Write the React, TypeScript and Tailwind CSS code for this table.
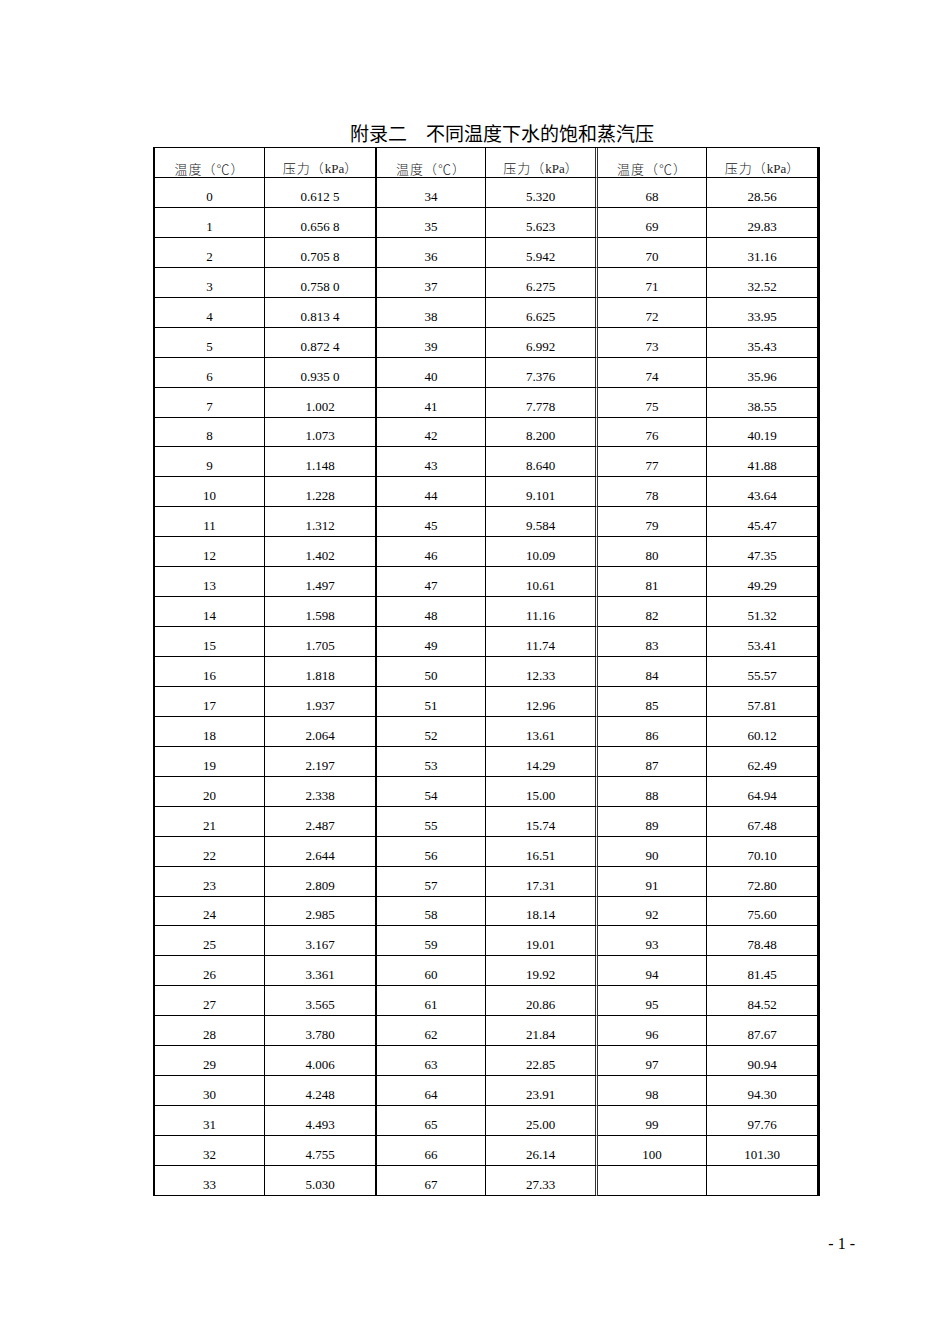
import React from "react";

const c1 = ["0.612 5","0.656 8","0.705 8","0.758 0","0.813 4","0.872 4","0.935 0","1.002","1.073","1.148","1.228","1.312","1.402","1.497","1.598","1.705","1.818","1.937","2.064","2.197","2.338","2.487","2.644","2.809","2.985","3.167","3.361","3.565","3.780","4.006","4.248","4.493","4.755","5.030"];
const c2 = ["5.320","5.623","5.942","6.275","6.625","6.992","7.376","7.778","8.200","8.640","9.101","9.584","10.09","10.61","11.16","11.74","12.33","12.96","13.61","14.29","15.00","15.74","16.51","17.31","18.14","19.01","19.92","20.86","21.84","22.85","23.91","25.00","26.14","27.33"];
const c3 = ["28.56","29.83","31.16","32.52","33.95","35.43","35.96","38.55","40.19","41.88","43.64","45.47","47.35","49.29","51.32","53.41","55.57","57.81","60.12","62.49","64.94","67.48","70.10","72.80","75.60","78.48","81.45","84.52","87.67","90.94","94.30","97.76","101.30"];

const serif = { fontFamily: '"Liberation Serif", "Noto Sans CJK SC", serif' };
const cjk = { fontFamily: '"Noto Sans CJK SC", sans-serif' };

function Row({ cells, header }: { cells: React.ReactNode[]; header?: boolean }) {
  const base = header
    ? "flex items-end justify-center border-b border-black pb-[1px] leading-[15px] text-[13px] text-[#222]"
    : "flex items-end justify-center border-b border-black pb-[3px] leading-[15px] text-[13px] text-black";
  return (
    <div className={header ? "flex h-[30px]" : "flex h-[29.94px]"}>
      <div className={`${base} w-[110px] border-r border-r-black`}>{cells[0]}</div>
      <div className={`${base} w-[112px] border-r-2 border-r-black`}>{cells[1]}</div>
      <div className={`${base} w-[109px] border-r border-r-black`}>{cells[2]}</div>
      <div className={`${base} w-[112px] border-r-[3px] border-double border-r-[#333]`}>{cells[3]}</div>
      <div className={`${base} w-[109px] border-r border-r-black`}>{cells[4]}</div>
      <div className={`${base} w-[113px] border-r-[3px] border-r-black`}>{cells[5]}</div>
    </div>
  );
}

export default function App() {
  const h1 = (
    <span style={cjk} className="font-light tracking-[1px]">温度（℃）</span>
  );
  const h2 = (
    <span>
      <span style={cjk} className="font-light tracking-[1px]">压力（</span>
      <span style={serif}>kPa</span>
      <span style={cjk} className="font-light">）</span>
    </span>
  );
  const rows: string[][] = [];
  for (let i = 0; i < 34; i++) {
    rows.push([
      String(i),
      c1[i],
      String(i + 34),
      c2[i],
      i < 33 ? String(i + 68) : "",
      i < 33 ? c3[i] : "",
    ]);
  }
  return (
    <div className="w-[950px] h-[1342px] bg-white pt-[123px]" style={serif}>
      <div
        className="ml-[350px] text-[19px] leading-[19px] text-black whitespace-pre"
        style={cjk}
      >
        附录二　不同温度下水的饱和蒸汽压
      </div>
      <div className="ml-[153px] mt-[5px] w-[667px] border-l-2 border-t border-black">
        <Row header cells={[h1, h2, h1, h2, h1, h2]} />
        {rows.map((r, i) => (
          <Row key={i} cells={r} />
        ))}
      </div>
      <div className="mt-[40px] pr-[95px] text-right text-[16px] leading-[16px] text-black whitespace-pre">
        - 1 -
      </div>
    </div>
  );
}
